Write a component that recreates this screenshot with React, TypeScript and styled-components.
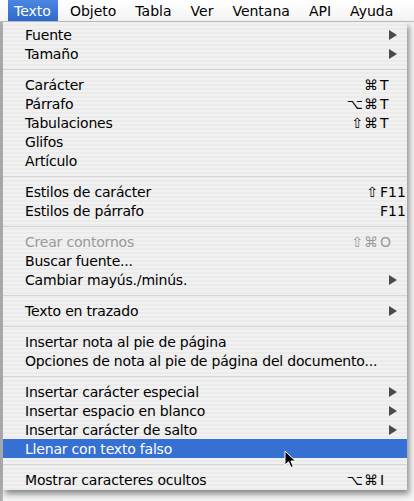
import styled, { createGlobalStyle } from "styled-components";

const GlobalStyle = createGlobalStyle`
  html, body {
    margin: 0;
    padding: 0;
  }
  body {
    width: 414px;
    height: 501px;
    overflow: hidden;
    background: #e9e9e9;
    font-family: "Lucida Grande", "DejaVu Sans", "Noto Sans", sans-serif;
  }
`;

interface MenuItem {
  label: string;
  mods?: string;
  key?: string;
  submenu?: boolean;
  disabled?: boolean;
  selected?: boolean;
}

type Entry = MenuItem | "sep";

const menuTitles = ["Texto", "Objeto", "Tabla", "Ver", "Ventana", "API", "Ayuda"];

const entries: Entry[] = [
  { label: "Fuente", submenu: true },
  { label: "Tamaño", submenu: true },
  "sep",
  { label: "Carácter", mods: "⌘", key: "T" },
  { label: "Párrafo", mods: "⌥⌘", key: "T" },
  { label: "Tabulaciones", mods: "⇧⌘", key: "T" },
  { label: "Glifos" },
  { label: "Artículo" },
  "sep",
  { label: "Estilos de carácter", mods: "⇧", key: "F11" },
  { label: "Estilos de párrafo", key: "F11" },
  "sep",
  { label: "Crear contornos", mods: "⇧⌘", key: "O", disabled: true },
  { label: "Buscar fuente..." },
  { label: "Cambiar mayús./minús.", submenu: true },
  "sep",
  { label: "Texto en trazado", submenu: true },
  "sep",
  { label: "Insertar nota al pie de página" },
  { label: "Opciones de nota al pie de página del documento..." },
  "sep",
  { label: "Insertar carácter especial", submenu: true },
  { label: "Insertar espacio en blanco", submenu: true },
  { label: "Insertar carácter de salto", submenu: true },
  { label: "Llenar con texto falso", selected: true },
  "sep",
  { label: "Mostrar caracteres ocultos", mods: "⌥⌘", key: "I" },
];

const Screen = styled.div`
  position: relative;
  width: 414px;
  height: 501px;
  overflow: hidden;
  background: linear-gradient(to right, #a9a9a9 0, #bdbdbd 3px, #f4f4f4 3px);
`;

const MenuBar = styled.div`
  display: flex;
  align-items: stretch;
  height: 21px;
  padding-left: 8px;
  background: linear-gradient(#ffffff, #f3f3f3);
  border-bottom: 1px solid #bcbcbc;
`;

const MenuTitle = styled.div<{ $active?: boolean }>`
  display: flex;
  align-items: center;
  padding: 0 7px 0 6px;
  margin-right: 6px;
  font-size: 14px;
  color: ${({ $active }) => ($active ? "#ffffff" : "#000000")};
  background: ${({ $active }) =>
    $active ? "linear-gradient(#4b86e0, #2f69cc)" : "transparent"};
`;

const Menu = styled.div`
  width: 404px;
  margin-left: 3px;
  padding: 3px 0 1px;
  background: repeating-linear-gradient(
    #f1f1f1 0,
    #f1f1f1 2px,
    #ebebeb 2px,
    #ebebeb 4px
  );
  box-shadow: 2px 4px 6px rgba(0, 0, 0, 0.45);
`;

const Row = styled.div<{ $selected?: boolean; $disabled?: boolean }>`
  display: grid;
  grid-template-columns: 1fr auto 27px;
  align-items: center;
  height: 19px;
  padding-left: 22px;
  font-size: 14px;
  letter-spacing: -0.2px;
  color: ${({ $selected, $disabled }) =>
    $selected ? "#ffffff" : $disabled ? "#9a9a9a" : "#000000"};
  background: ${({ $selected }) => ($selected ? "#3570d2" : "transparent")};
`;

const Label = styled.span`
  white-space: nowrap;
`;

const Mods = styled.span`
  text-align: right;
  padding-right: 1px;
  font-size: 14px;
  letter-spacing: 1px;
`;

const Key = styled.span`
  white-space: nowrap;
  letter-spacing: 0;
`;

const Separator = styled.div`
  height: 12px;
  display: flex;
  align-items: center;

  &::after {
    content: "";
    flex: 1;
    height: 1px;
    background: #d4d4d4;
  }
`;

const Arrow = styled.span`
  display: block;
  margin-left: 9px;
  width: 0;
  height: 0;
  border-top: 5px solid transparent;
  border-bottom: 5px solid transparent;
  border-left: 8px solid #4a4a4a;
`;

const Pointer = styled.svg`
  position: absolute;
  left: 284px;
  top: 450px;
`;

export default function App() {
  return (
    <Screen>
      <GlobalStyle />
      <MenuBar>
        {menuTitles.map((t, i) => (
          <MenuTitle key={t} $active={i === 0}>
            {t}
          </MenuTitle>
        ))}
      </MenuBar>
      <Menu>
        {entries.map((e, i) =>
          e === "sep" ? (
            <Separator key={i} />
          ) : (
            <Row key={i} $selected={e.selected} $disabled={e.disabled}>
              <Label>{e.label}</Label>
              <Mods>{e.mods}</Mods>
              {e.submenu ? <Arrow /> : <Key>{e.key}</Key>}
            </Row>
          )
        )}
      </Menu>
      <Pointer width="14" height="20" viewBox="0 0 14 20">
        <path
          d="M1 1 L1 15 L4.5 11.8 L7 17.5 L9.3 16.5 L6.9 11 L11.5 11 Z"
          fill="#000"
          stroke="#fff"
          strokeWidth="1"
          strokeLinejoin="round"
        />
      </Pointer>
    </Screen>
  );
}
